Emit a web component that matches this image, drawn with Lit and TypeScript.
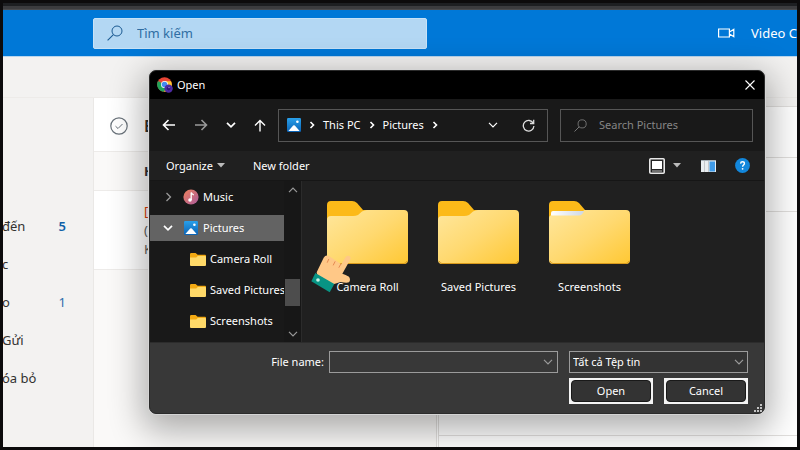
import { LitElement, html, css, svg, nothing } from "lit";
import { customElement, property } from "lit/decorators.js";

const chevronRight = html`<svg width="6" height="8" viewBox="0 0 6 8"><path d="M1.5 1 4.5 4 1.5 7" fill="none" stroke="currentColor" stroke-width="1.6"/></svg>`;
const chevronDown = html`<svg width="10" height="6" viewBox="0 0 10 6"><path d="M1 .8 5 4.8 9 .8" fill="none" stroke="currentColor" stroke-width="1.2"/></svg>`;
const chevronDownBold = html`<svg width="10" height="6" viewBox="0 0 10 6"><path d="M1 .8 5 4.8 9 .8" fill="none" stroke="currentColor" stroke-width="1.7"/></svg>`;
const magnifier = html`<svg width="100%" height="100%" viewBox="0 0 16 16"><circle cx="10" cy="6" r="5" fill="none" stroke="currentColor"/><path d="M6.4 9.6.6 15.4" fill="none" stroke="currentColor" stroke-width="1.1"/></svg>`;

const pictureIcon = html`<svg width="14" height="14" viewBox="0 0 14 14">
  <defs><linearGradient id="p" x1="0" y1="0" x2="0" y2="1"><stop offset="0" stop-color="#29a0ea"/><stop offset="1" stop-color="#0b62b4"/></linearGradient></defs>
  <rect width="14" height="14" rx="1.2" fill="url(#p)"/><path d="M1.4 13 6.2 7.6q.8-.8 1.6 0L12.6 13Z" fill="#fff"/><circle cx="10.4" cy="3.8" r="1.3" fill="#fff"/></svg>`;

const musicIcon = html`<svg width="16" height="16" viewBox="0 0 16 16">
  <defs><linearGradient id="m" x1="0" y1="0" x2="1" y2="1"><stop offset="0" stop-color="#f0825c"/><stop offset="1" stop-color="#a95a9c"/></linearGradient></defs>
  <circle cx="8" cy="8" r="7.6" fill="url(#m)"/><circle cx="7" cy="11" r="1.8" fill="#fff"/><path d="M8.2 11V3.4q.6 1.8 2.6 2.6" fill="none" stroke="#fff" stroke-width="1.3"/></svg>`;

const smallFolder = html`<svg width="16" height="13" viewBox="0 0 16 13">
  <path d="M0 1.2Q0 0 1.2 0H5.6L7.6 1.8H15Q16 1.8 16 3V6H0Z" fill="#f3a912"/><path d="M0 4.4H6.2L7.8 3H15.2q.8 0 .8.9V12q0 1-1 1H1q-1 0-1-1Z" fill="#ffd968"/></svg>`;

const largeFolder = (filled: boolean) => html`<svg width="81" height="64" viewBox="0 0 81 64">
  <defs><linearGradient id="f" x1="0" y1="0" x2="1" y2="1"><stop offset="0" stop-color="#ffe79d"/><stop offset=".5" stop-color="#ffd970"/><stop offset="1" stop-color="#ffc833"/></linearGradient>
  <linearGradient id="w" x1="0" y1="0" x2="1" y2="0"><stop offset="0" stop-color="#fff"/><stop offset="1" stop-color="#cfd8e4"/></linearGradient></defs>
  <path d="M0 4Q0 0 4 0H25Q28 0 30 2L36 9H77V20H0Z" fill="#fcba19"/>
  ${filled
    ? svg`<path d="M0 17Q0 14 4 14H30Q32 14 35 9H77Q81 9 81 13V59Q81 63 77 63H4Q0 63 0 59Z" fill="url(#f)"/><path d="M2 14V12Q2 10 4 10H35Q33 14.500 30 14.500H2Z" fill="url(#w)"/>`
    : svg`<path d="M0 19Q0 15 4 15H26Q29 15 31 14L35 10.500Q37 9 40 9H77Q81 9 81 13V59Q81 63 77 63H4Q0 63 0 59Z" fill="url(#f)"/>`}
  <path d="M1 60Q2 62.500 4 62.500H77Q79 62.500 80 60" fill="none" stroke="#d99a1c"/></svg>`;

const handIcon = html`<svg class="hand" width="42" height="41" viewBox="30 200 126 123">
  <path d="M50 258 71 214Q78 203 88 210L124 234 137 212Q144 204 151 212 153 216 150 221L127 262Q137 265 147 271 153 280 147 288 140 291 122 287L100 294 52 266Z" fill="#ffc887"/>
  <path d="M86 219 82 228M105 226 100 236M122 234 117 243" fill="none" stroke="#e68a52" stroke-width="3" stroke-linecap="round"/>
  <path d="M46 260 103 293 89 318 34 285Z" fill="#089484"/><circle cx="54" cy="281" r="5.500" fill="#c9f2e5"/></svg>`;

const chromeIcon = html`<svg width="16" height="16" viewBox="0 0 16 16">
  <circle cx="7.500" cy="7.500" r="7.300" fill="#e94535"/><path d="M7.500 7.500 1 4A7.300 7.300 0 0 0 7 14.800L10.500 9Z" fill="#20a359"/>
  <path d="M7.500 4.200H14A7.300 7.300 0 0 1 7 14.800L10.300 9.200Z" fill="#fbc62f"/>
  <circle cx="7.500" cy="7.500" r="3.500" fill="#fff"/><circle cx="7.500" cy="7.500" r="2.800" fill="#438bef"/>
  <circle cx="11.600" cy="11.600" r="4.200" fill="#4d2aa3"/><circle cx="11.600" cy="11.600" r="1.800" fill="#301477"/><circle cx="12" cy="10.600" r=".7" fill="#b59af0"/></svg>`;

@customElement("mail-page")
class MailPage extends LitElement {
  static styles = css`
    :host { display: flex; flex-direction: column; flex: 1; min-width: 0; color: #323130; font: 13px/19px "Noto Sans", "Open Sans", sans-serif; }
    .strip { height: 7px; background: linear-gradient(#1d1f22 0 40%, #3b3c3f 50%, #3b3c3f 85%, #5a5b5d); }
    .top { height: 46px; display: flex; align-items: center; background: #0078d7; border-bottom: 1px solid #b9d6ee; padding-left: 90px; color: #fff; }
    .search { flex: 0 1 334px; box-sizing: border-box; height: 31px; display: flex; align-items: center; gap: 14px; padding-left: 13px; border-radius: 2px; background: #b3d7f3; border: 1px solid #c7e2f7; color: #1b5a92; }
    .glass { width: 16px; height: 16px; line-height: 0; }
    .search input { flex: 1; min-width: 0; border: 0; padding: 0; background: none; font: inherit; color: inherit; outline: none; }
    .search input::placeholder { color: #2f6ea3; opacity: 1; }
    .call { margin-left: auto; flex: none; width: 79px; white-space: nowrap; display: flex; align-items: center; gap: 16px; padding: 0; border: 0; background: none; color: #fff; font: inherit; }
    .call svg { flex: none; }
    .tools { height: 40px; box-sizing: content-box; background: #f3f2f1; border-bottom: 1px solid #edebe9; }
    .columns { flex: 1; display: grid; grid-template-columns: 91px minmax(0, 343fr) minmax(0, 360fr); }
    nav { background: #f3f2f1; border-right: 1px solid #eae8e6; padding-top: 109px; overflow: hidden; }
    nav a { display: flex; justify-content: space-between; align-items: center; height: 38px; padding-right: 27px; margin-left: -1px; color: inherit; text-decoration: none; white-space: nowrap; }
    .count { color: #2b6cab; }
    .strong { font-weight: 600; color: #0f61a8; }
    .list { background: #faf9f8; border-right: 1px solid #e1dfdd; }
    .head, .group, .mail { display: flex; padding-left: 50px; border-bottom: 1px solid #edebe9; box-sizing: border-box; }
    .head { height: 54px; background: #fff; align-items: center; padding-left: 16px; gap: 16px; font-size: 16px; font-weight: 600; padding-top: 3px; }
    .group { height: 39px; align-items: center; font-weight: 700; }
    .mail { height: 79px; background: #fff; flex-direction: column; justify-content: center; }
    .tag { color: #d83b01; }
    .mail span + span { color: #605e5c; }
    .reader { background: #f3f2f1; border-left: 1px solid #e1dfdd; margin-left: 1px; display: flex; flex-direction: column; padding-top: 8px; }
    .reader div { background: #fff; border-top: 1px solid #e1dfdd; box-sizing: border-box; }
    .subject { height: 51px; }
    .sender { height: 54px; }
    .reader .body { flex: 1; }
    .foot { height: 12px; }
  `;
  render() {
    const folders: [string, string][] = [["đến", "5"], ["c", ""], ["o", "1"], ["Gửi", ""], ["óa bỏ", ""]];
    return html`
      <div class="strip"></div>
      <div class="top">
        <div class="search"><span class="glass">${magnifier}</span><input aria-label="Tìm kiếm" placeholder="Tìm kiếm"></div>
        <button class="call"><svg width="17" height="10" viewBox="0 0 17 10"><path d="M.6 1H11.400V9H.6ZM11.400 4 15.800 1.400V8.600L11.400 6" fill="none" stroke="#fff" stroke-width="1.200"/></svg>Video C</button>
      </div>
      <div class="tools"></div>
      <div class="columns">
        <nav>${folders.map(([name, n], i) => html`<a href="#"><span>${name}</span><span class="count ${i ? "" : "strong"}">${n}</span></a>`)}</nav>
        <div class="list">
          <div class="head"><svg width="18" height="18" viewBox="0 0 18 18" fill="none" stroke="#69727a"><circle cx="9" cy="9" r="8.200" stroke-width="1.200"/><path d="M5.500 9.200 8 11.500 12.500 7"/></svg>B</div>
          <div class="group">H</div>
          <div class="mail"><span class="tag">[</span><span>(</span><span>K</span></div>
        </div>
        <div class="reader"><div class="subject"></div><div class="sender"></div><div class="body"></div><div class="foot"></div></div>
      </div>`;
  }
}

@customElement("open-dialog")
class OpenDialog extends LitElement {
  @property({ type: Array }) folders = ["Camera Roll", "Saved Pictures", "Screenshots"];

  static styles = css`
    :host { display: block; box-sizing: border-box; border: 1px solid #2b2b2b; border-radius: 7px; overflow: hidden; background: #202020; color: #fff; font: 11px/16px "Noto Sans", "Open Sans", sans-serif; box-shadow: 0 0 0 1px #d4d4d4, 0 10px 34px 6px rgba(0, 0, 0, .32); }
    button { padding: 0; border: 0; background: none; color: inherit; font: inherit; display: flex; align-items: center; justify-content: center; }
    svg { display: block; flex: none; }
    .title { display: flex; align-items: center; gap: 4px; height: 28px; padding: 0 9px 0 7px; background: #000; }
    .close { margin-left: auto; }
    .nav { display: flex; align-items: center; gap: 12px; height: 52px; padding: 0 11px 0 12px; background: #191919; }
    .arrows { display: flex; align-items: center; gap: 18px; }
    .dim { color: #9a9a9a; }
    .box { box-sizing: border-box; height: 33px; border: 1px solid #565656; display: flex; align-items: center; }
    .address { flex: 1; min-width: 0; gap: 8px; padding: 0 12px 0 8px; }
    .drop { margin-left: auto; margin-right: 16px; }
    .find { flex: 0 1 193px; min-width: 0; gap: 12px; padding: 0 13px; color: #858585; }
    .glass { flex: none; width: 13px; height: 13px; }
    .find input { min-width: 0; flex: 1; border: 0; padding: 0; background: none; color: inherit; font: inherit; outline: none; }
    .find input::placeholder { color: #858585; opacity: 1; }
    .commands { display: flex; align-items: center; height: 29px; padding: 0 14px 0 16px; border-bottom: 1px solid #161616; }
    .organize { gap: 4px; margin-right: 28px; }
    .view { margin-left: auto; gap: 8px; margin-right: 20px; }
    .pane { margin-right: 19px; }
    .main { display: grid; grid-template-columns: 134px 17px minmax(0, 1fr); height: 161px; }
    .tree { background: #191919; display: flex; flex-direction: column; gap: 5px; padding-top: 3px; box-sizing: border-box; overflow: hidden; }
    .row { flex: none; width: 100%; height: 26px; display: grid; grid-template-columns: 10px 16px 1fr; align-items: center; column-gap: 10px; padding-left: 13px; box-sizing: border-box; text-align: left; white-space: nowrap; }
    .row span { margin-left: -6px; }
    .row svg { justify-self: center; }
    .child { display: flex; justify-content: flex-start; padding-left: 40px; }
    .selected { background: #636363; }
    .bar { background: #171717; display: flex; flex-direction: column; align-items: center; justify-content: space-between; padding: 6px 0 5px; color: #9a9a9a; }
    .thumb { width: 15px; height: 27px; background: #4d4d4d; margin-top: 60px; }
    .up { transform: rotate(180deg); }
    .files { border-left: 1px solid #2b2b2b; display: grid; grid-template-columns: repeat(3, 111px); align-content: start; padding: 20px 0 0 10px; }
    .file { position: relative; flex-direction: column; gap: 14px; }
    .hand { position: absolute; left: -2px; top: 52px; }
    .foot { background: #383838; border-top: 1px solid #2c2c2c; display: grid; grid-template-columns: 174px minmax(0, 1fr) 179px; gap: 5px 0; padding: 8px 16px 9px 0; position: relative; align-items: start; }
    .foot label { text-align: right; line-height: 22px; }
    .combo, select { box-sizing: border-box; height: 22px; border: 1px solid #9b9b9b; }
    .combo { display: flex; align-items: center; background: #383838; margin: 0 11px 0 5px; padding-right: 4px; }
    .combo input { flex: 1; min-width: 0; border: 0; padding: 0 4px; background: none; color: inherit; font: inherit; outline: none; }
    .type { display: grid; align-items: center; }
    .type select, .type svg { grid-area: 1 / 1; }
    .type svg { justify-self: end; margin-right: 4px; pointer-events: none; }
    select { appearance: none; width: 100%; border-radius: 0; background: #333; color: #fff; font: inherit; padding: 0 3px; }
    .actions { grid-column: 3; display: grid; grid-template-columns: 1fr 1fr; gap: 11px; }
    .actions button { height: 26px; padding: 2px; background: #f4f4f4; align-items: stretch; }
    .actions span { flex: 1; background: #333; border: 1px solid #191919; border-radius: 4px; line-height: 20px; }
    .grip { position: absolute; right: 2px; bottom: 1px; fill: #c4c4c4; }
  `;
  render() {
    return html`
      <div class="title">${chromeIcon}<span>Open</span>
        <button class="close" aria-label="Close"><svg width="10" height="10" viewBox="0 0 10 10"><path d="M.5.5 9.500 9.500M9.500.5.5 9.500" stroke="#fff" stroke-width="1.100"/></svg></button></div>
      <div class="nav">
        <div class="arrows">
          <button aria-label="Back"><svg width="14" height="12" viewBox="0 0 14 12"><path d="M13 6H2M6.500 1 1.500 6 6.500 11" fill="none" stroke="currentColor" stroke-width="1.600"/></svg></button>
          <button class="dim" aria-label="Forward"><svg width="14" height="12" viewBox="0 0 14 12"><path d="M1 6H12M7.500 1 12.500 6 7.500 11" fill="none" stroke="currentColor" stroke-width="1.600"/></svg></button>
          <button aria-label="Recent">${chevronDownBold}</button>
          <button aria-label="Up"><svg width="12" height="13" viewBox="0 0 12 13"><path d="M6 12.500V1.500M1 6.500 6 1.500 11 6.500" fill="none" stroke="currentColor" stroke-width="1.400"/></svg></button>
        </div>
        <div class="box address">${pictureIcon}${chevronRight}<button>This PC</button>${chevronRight}<button>Pictures</button>${chevronRight}
          <button class="drop" aria-label="Locations">${chevronDown}</button>
          <button aria-label="Refresh"><svg width="13" height="13" viewBox="0 0 13 13"><path d="M11.300 4.300A5.300 5.300 0 1 0 11.900 7M11.700.7V4.500H8" fill="none" stroke="#ddd" stroke-width="1.300"/></svg></button></div>
        <div class="box find"><span class="glass">${magnifier}</span><input aria-label="Search Pictures" placeholder="Search Pictures"></div>
      </div>
      <div class="commands">
        <button class="organize">Organize <svg width="8" height="5" viewBox="0 0 8 5"><path d="M0 0H8L4 4.600Z" fill="#bbb"/></svg></button>
        <button>New folder</button>
        <button class="view" aria-label="View"><svg width="16" height="16" viewBox="0 0 16 16"><rect x=".8" y=".8" width="14.400" height="14.400" rx="1" fill="#222" stroke="#e8e8e8" stroke-width="1.600"/><rect x="3" y="3" width="10" height="8" fill="#fff"/><path d="M3 13H13" stroke="#bbb"/></svg>
          <svg width="8" height="5" viewBox="0 0 8 5"><path d="M0 0H8L4 4.600Z" fill="#bbb"/></svg></button>
        <button class="pane" aria-label="Preview pane"><svg width="15" height="12" viewBox="0 0 15 12"><rect width="15" height="12" fill="#e9edf0"/><path d="M0 .5H15" stroke="#a8b1b8"/><path d="M3.500 1V12M7.500 1V12" stroke="#c4c8cc"/><rect x="8.500" y="1.500" width="5.500" height="10" fill="#3f9be8"/></svg></button>
        <button aria-label="Help"><svg width="15" height="15" viewBox="0 0 15 15"><circle cx="7.500" cy="7.500" r="7.400" fill="#1287dc"/><path d="M5.600 5.600Q5.700 3.800 7.500 3.800 9.400 3.800 9.400 5.500 9.400 6.500 8.400 7.100 7.600 7.600 7.600 8.700" fill="none" stroke="#fff" stroke-width="1.400"/><circle cx="7.600" cy="10.800" r=".9" fill="#fff"/></svg></button>
      </div>
      <div class="main">
        <div class="tree">
          <button class="row"><svg class="dim" width="7" height="10" viewBox="0 0 7 10"><path d="M1.500 1 5.500 5 1.500 9" fill="none" stroke="currentColor" stroke-width="1.300"/></svg>${musicIcon}<span>Music</span></button>
          <button class="row selected">${chevronDownBold}${pictureIcon}<span>Pictures</span></button>
          ${this.folders.map((f) => html`<button class="row child">${smallFolder}<span>${f}</span></button>`)}
        </div>
        <div class="bar"><span class="up">${chevronDown}</span><div class="thumb"></div>${chevronDown}</div>
        <div class="files">${this.folders.map((f, i) => html`<button class="file">${largeFolder(i === 2)}<span>${f}</span>${i === 0 ? handIcon : nothing}</button>`)}</div>
      </div>
      <div class="foot">
        <label for="name">File name:</label>
        <div class="combo"><input id="name"><button class="dim" aria-label="Recent names">${chevronDown}</button></div>
        <div class="type dim"><select aria-label="File type"><option>Tất cả Tệp tin</option></select>${chevronDown}</div>
        <div class="actions"><button><span>Open</span></button><button><span>Cancel</span></button></div>
        <svg class="grip" width="8" height="8" viewBox="0 0 8 8"><path d="M6 0H8V2H6ZM3 3H5V5H3ZM6 3H8V5H6ZM0 6H2V8H0ZM3 6H5V8H3ZM6 6H8V8H6Z"/></svg>
      </div>`;
  }
}

@customElement("app-root")
class AppRoot extends LitElement {
  static styles = css`
    :host { display: flex; position: relative; box-sizing: border-box; min-height: 100vh; border: 3px solid #0c0b0c; overflow: hidden; }
    open-dialog { position: absolute; left: 146px; right: 32px; top: 67px; }
  `;
  render() {
    return html`<mail-page></mail-page><open-dialog></open-dialog>`;
  }
}
